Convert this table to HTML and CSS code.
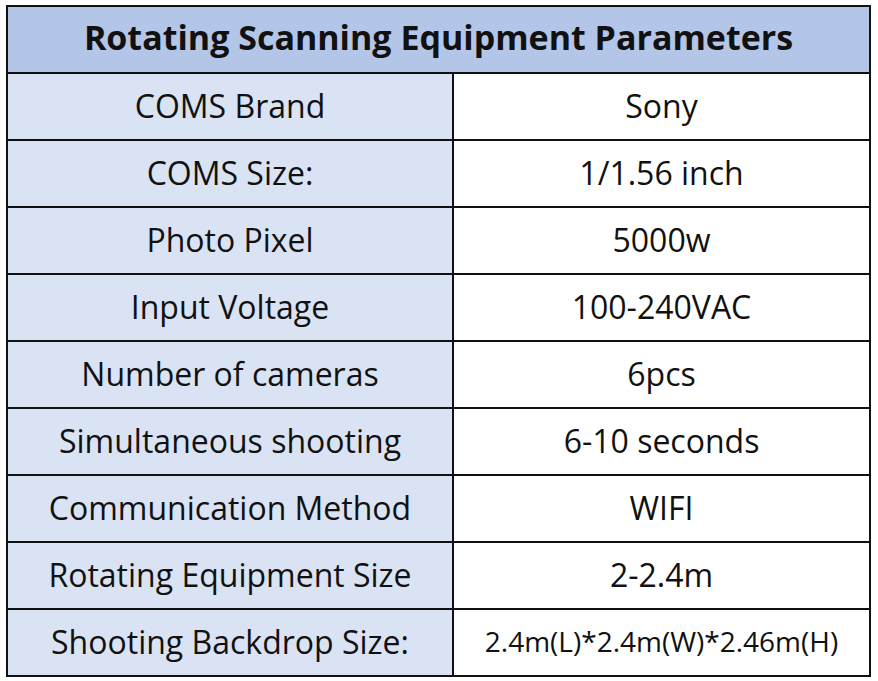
FILE: index.html
```html
<!DOCTYPE html>
<html>
<head>
<meta charset="utf-8">
<link rel="stylesheet" href="styles.css">
</head>
<body>
<table class="params">
  <colgroup><col class="c-key"><col class="c-val"></colgroup>
  <thead>
    <tr><th colspan="2" class="title">Rotating Scanning Equipment Parameters</th></tr>
  </thead>
  <tbody>
    <tr><td class="key">COMS Brand</td><td class="val">Sony</td></tr>
    <tr><td class="key">COMS Size:</td><td class="val">1/1.56 inch</td></tr>
    <tr><td class="key">Photo Pixel</td><td class="val">5000w</td></tr>
    <tr><td class="key">Input Voltage</td><td class="val">100-240VAC</td></tr>
    <tr><td class="key">Number of cameras</td><td class="val">6pcs</td></tr>
    <tr><td class="key">Simultaneous shooting</td><td class="val">6-10 seconds</td></tr>
    <tr><td class="key">Communication Method</td><td class="val">WIFI</td></tr>
    <tr><td class="key">Rotating Equipment Size</td><td class="val">2-2.4m</td></tr>
    <tr><td class="key">Shooting Backdrop Size:</td><td class="val small">2.4m(L)*2.4m(W)*2.46m(H)</td></tr>
  </tbody>
</table>
</body>
</html>
```
FILE: styles.css
```css
html, body {
  margin: 0;
  padding: 0;
  background: #ffffff;
}
body {
  padding: 5px 0 0 6px;
  font-family: "Open Sans", "Noto Sans", sans-serif;
  color: #111111;
}
.params {
  border-collapse: collapse;
  table-layout: fixed;
  width: 865px;
}
.c-key {
  width: 446px;
}
.params th, .params td {
  border: 2px solid #111111;
  height: 67px;
  padding: 0 0 3px 0;
  text-align: center;
  vertical-align: middle;
  box-sizing: border-box;
  white-space: nowrap;
}
.params th.title {
  padding-bottom: 5px;
}
.title {
  background: #b4c6e7;
  font-size: 34px;
  font-weight: 700;
}
.key {
  background: #dae3f3;
  font-size: 32px;
}
.val {
  background: #ffffff;
  font-size: 32px;
}
.val.small {
  font-size: 28px;
}
```
